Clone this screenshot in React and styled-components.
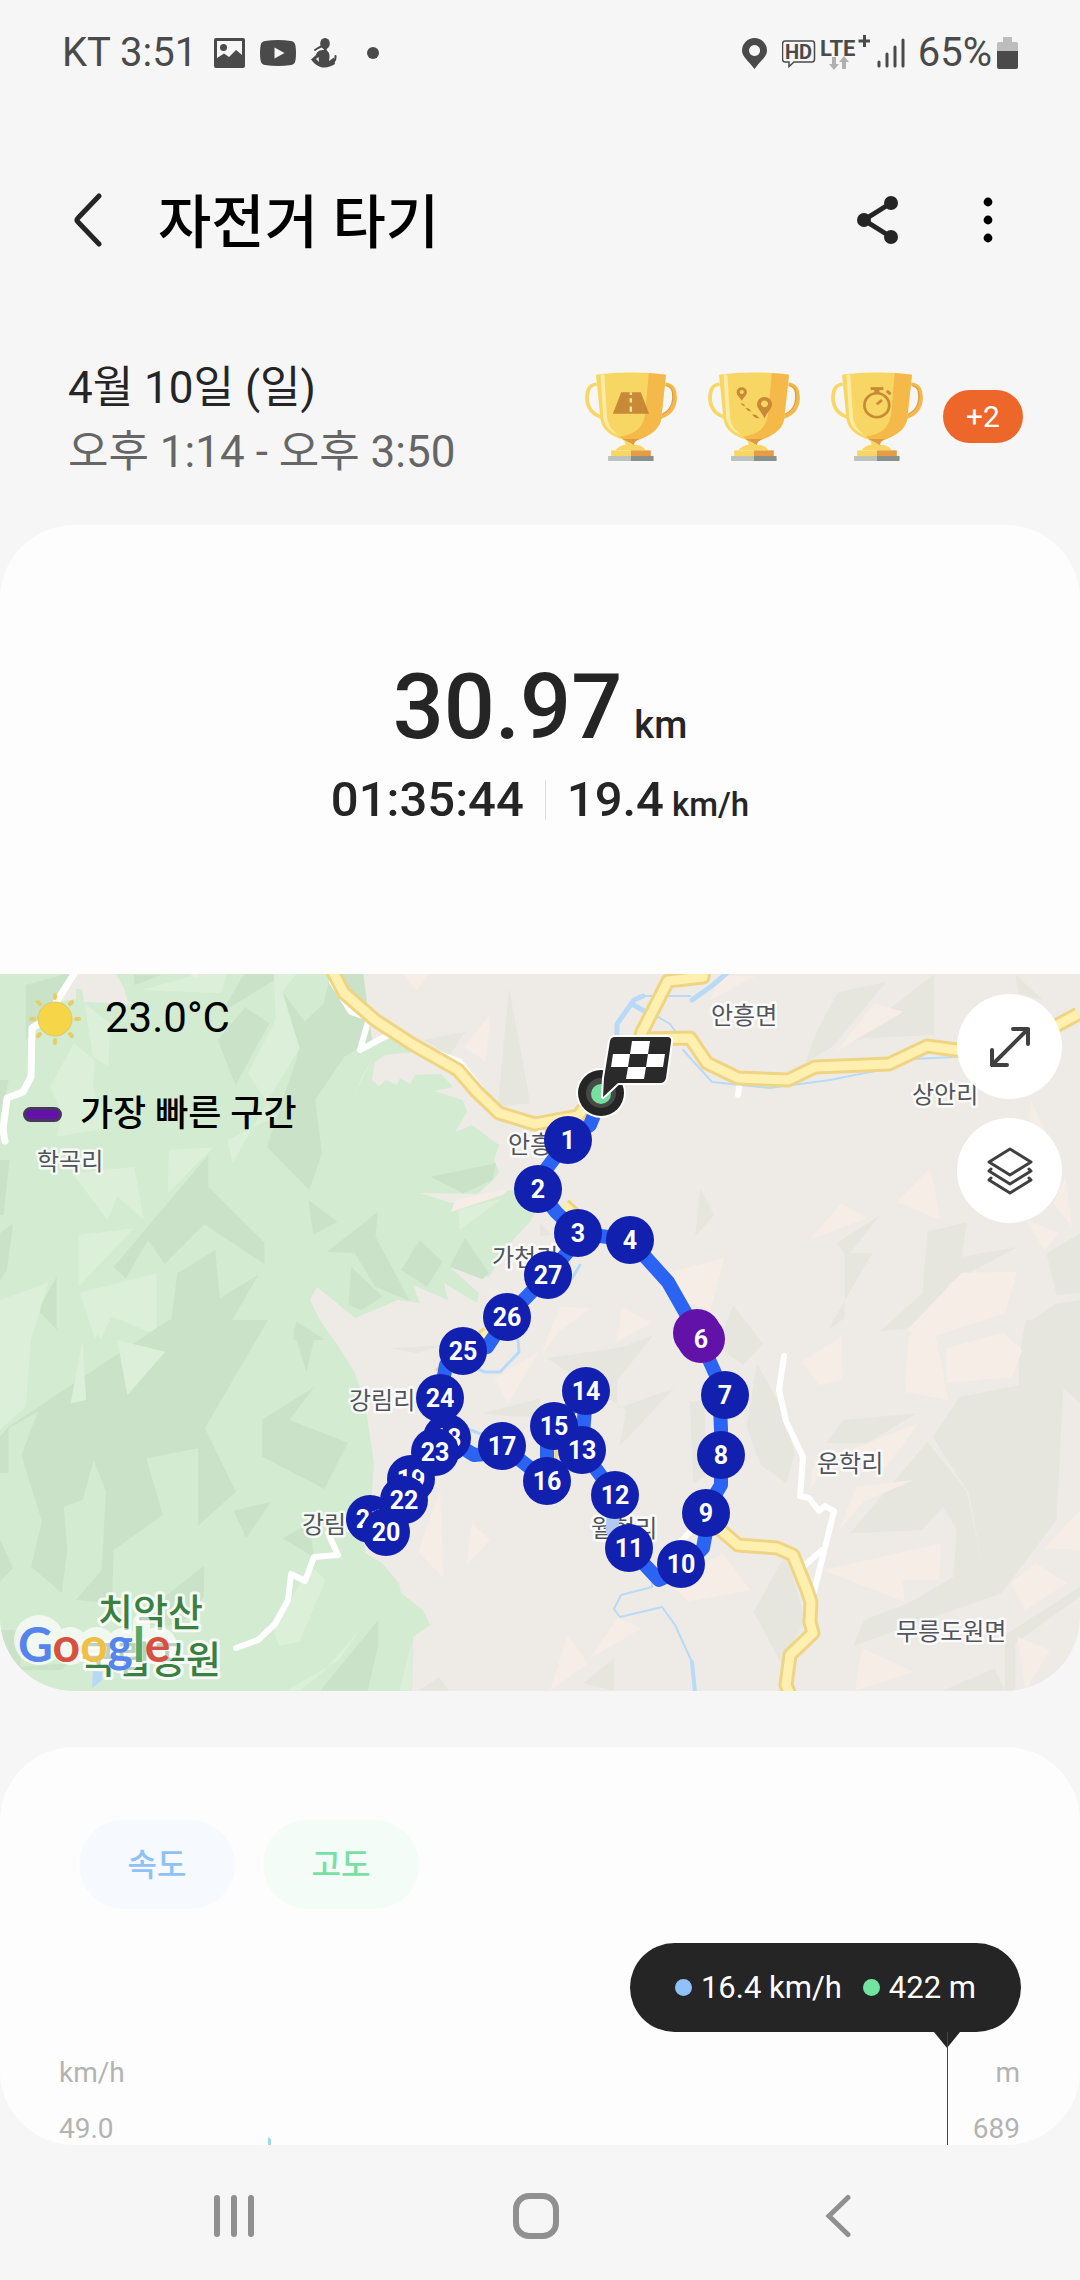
import React from 'react';
import styled, { createGlobalStyle } from 'styled-components';

const FONT = "Roboto, 'Noto Sans CJK KR', sans-serif";

const GlobalStyle = createGlobalStyle`
  *, *::before, *::after { box-sizing: border-box; }
  body {
    margin: 0;
    background: #f6f6f6;
    color: #252525;
    font-family: ${FONT};
  }
  button {
    font-family: inherit;
    border: 0;
    padding: 0;
    background: none;
    cursor: pointer;
  }
  h1, p { margin: 0; }
  svg { display: block; }
`;

const Screen = styled.div`
  display: flex;
  flex-direction: column;
  min-height: 100vh;
`;

/* ---------- status bar ---------- */

const StatusBar = styled.div`
  display: flex;
  align-items: center;
  justify-content: space-between;
  height: 106px;
  padding: 0 62px;
  color: #4a4a4a;
  font-size: 40px;
  line-height: 48px;
`;

const StatusGroup = styled.div`
  display: flex;
  align-items: center;
  gap: ${(p) => p.$gap}px;
`;

/* ---------- app bar ---------- */

const AppBar = styled.header`
  display: flex;
  align-items: center;
  height: 228px;
  padding: 0 64px 0 60px;
`;

const IconButton = styled.button`
  display: grid;
  place-items: center;
  width: 56px;
  height: 72px;
`;

const Title = styled.h1`
  flex: 1;
  margin-left: 42px;
  padding-top: 6px;
  color: #000;
  font-size: 58px;
  line-height: 72px;
  font-weight: 500;
`;

const Actions = styled.div`
  display: flex;
  gap: 54px;
`;

/* ---------- date and trophies ---------- */

const Summary = styled.section`
  display: flex;
  align-items: center;
  justify-content: space-between;
  padding: 22px 57px 41px 68px;
`;

const SummaryLine = styled.p`
  color: ${(p) => (p.$muted ? '#666' : '#252525')};
  font-size: 44px;
  line-height: 64px;
`;

const Awards = styled.div`
  display: flex;
  align-items: center;
  gap: 20px;
  padding-bottom: 8px;
`;

const Trophies = styled.div`
  display: flex;
  gap: 31px;
`;

const MoreBadge = styled.button`
  width: 80px;
  height: 53px;
  border-radius: 27px;
  background: #ed672b;
  color: #fff;
  font-size: 30px;
  line-height: 53px;
`;

/* ---------- cards ---------- */

const Card = styled.section`
  overflow: hidden;
  border-radius: 74px;
  background: #fdfdfd;
`;

const Totals = styled.div`
  display: flex;
  flex-direction: column;
  align-items: center;
  gap: 12px;
  padding: 133px 24px 144px;
  font-weight: 500;
`;

const Metric = styled.p`
  display: flex;
  align-items: baseline;
  gap: ${(p) => (p.$large ? 12 : 8)}px;
  font-size: ${(p) => (p.$large ? 90 : 49)}px;
  line-height: ${(p) => (p.$large ? 100 : 60)}px;
`;

const Unit = styled.span`
  font-size: ${(p) => (p.$large ? 38 : 33)}px;
  line-height: 40px;
`;

const MetricRow = styled.div`
  display: flex;
  align-items: center;
`;

const Divider = styled.span`
  width: 1px;
  height: 40px;
  margin: 0 21px;
  background: #dedede;
`;

/* ---------- map ---------- */

const MapPanel = styled.div`
  position: relative;
  height: 717px;
`;

const MapCanvas = styled.svg`
  width: 100%;
  height: 100%;
`;

const MapInfo = styled.div`
  position: absolute;
  top: 16px;
  left: 23px;
  display: flex;
  flex-direction: column;
  gap: 40px;
  color: #000;
`;

const InfoRow = styled.div`
  display: flex;
  align-items: center;
  gap: 18px;
  font-size: ${(p) => p.$size}px;
  font-weight: ${(p) => (p.$strong ? 500 : 400)};
  line-height: 56px;
`;

const Swatch = styled.span`
  width: 39px;
  height: 15px;
  border: 3px solid #47385a;
  border-radius: 8px;
  background: #6212a8;
`;

const MapTools = styled.div`
  position: absolute;
  top: 20px;
  right: 18px;
  display: flex;
  flex-direction: column;
  gap: 19px;
`;

const RoundButton = styled.button`
  display: grid;
  place-items: center;
  width: 105px;
  height: 105px;
  border-radius: 50%;
  background: #fff;
`;

const Wordmark = styled.span`
  position: absolute;
  left: 18px;
  bottom: 17px;
  font-family: Lato, sans-serif;
  font-size: 48px;
  font-weight: 700;
  line-height: 60px;
`;

const Letter = styled.span`
  color: ${(p) => p.$color};
`;

/* ---------- chart card ---------- */

const ChartCard = styled(Card)`
  display: flex;
  flex-direction: column;
  margin-top: 56px;
  padding-top: 73px;
`;

const Chips = styled.div`
  display: flex;
  gap: 28px;
  padding: 0 79px;
`;

const Chip = styled.button`
  width: 156px;
  height: 89px;
  padding-bottom: 5px;
  border-radius: 45px;
  background: ${(p) => p.$bg};
  color: ${(p) => p.$color};
  font-size: 32px;
  font-weight: 500;
`;

const Readout = styled.div`
  position: relative;
  align-self: flex-end;
  display: flex;
  align-items: center;
  gap: 21px;
  height: 89px;
  margin: 34px 59px 25px;
  padding: 0 45px;
  border-radius: 45px;
  background: #252525;
  color: #fff;
  font-size: 31px;

  &::before {
    content: '';
    position: absolute;
    top: 100%;
    right: 61px;
    width: 26px;
    height: 16px;
    background: #252525;
    clip-path: polygon(0 0, 100% 0, 50% 100%);
  }

  &::after {
    content: '';
    position: absolute;
    top: 100%;
    right: 73px;
    width: 1px;
    height: 113px;
    background: #444;
  }
`;

const Reading = styled.span`
  display: flex;
  align-items: center;
  gap: 9px;

  &::before {
    content: '';
    width: 17px;
    height: 17px;
    border-radius: 50%;
    background: ${(p) => p.$color};
  }
`;

const Axis = styled.div`
  position: relative;
  display: flex;
  flex-direction: column;
  gap: 24px;
  padding: 0 60px 0 59px;
  color: #b3b3b3;
  font-size: 28px;
  line-height: 32px;
`;

const AxisRow = styled.div`
  display: flex;
  justify-content: space-between;
`;

const Trace = styled.svg`
  position: absolute;
  left: 268px;
  bottom: 0;
`;

/* ---------- navigation bar ---------- */

const NavBar = styled.nav`
  display: grid;
  grid-template-columns: repeat(3, 1fr);
  align-items: center;
  height: 135px;
  padding: 6px 91px 0 83px;
`;

const NavButton = styled.button`
  display: grid;
  place-items: center;
  height: 100px;
`;

/* ---------- drawings ---------- */

const TrophyIcon = ({ children }) => (
  <svg width="92" height="89" viewBox="131 98 267 268" preserveAspectRatio="none" aria-hidden="true">
    <path d="M165 135C140 136 136 160 137 180C139 208 154 226 180 234" fill="none" stroke="#f8d766" strokeWidth="11" />
    <path d="M364 135C389 136 393 160 392 180C390 208 375 226 349 234" fill="none" stroke="#f5b94a" strokeWidth="11" />
    <path d="M368 140C384 142 387 160 386 178C384 202 372 218 354 226" fill="none" stroke="#de9c42" strokeWidth="4" />
    <path d="M163 106C220 97 310 97 366 106L352 240C346 276 310 292 286 302H243C206 292 180 270 176 240Z" fill="#f8d663" />
    <path d="M316 101L366 106L352 240C346 276 310 292 286 302H243L232 292C280 286 302 262 306 220Z" fill="#f5b94a" />
    <path d="M176 106L187 105L195 235C199 262 212 276 228 287C203 278 188 262 184 236Z" fill="#fdeba5" />
    <path d="M240 300H288L280 306C270 312 278 318 270 319L256 316Z" fill="#e09a42" />
    <path d="M238 299C252 306 268 314 272 318H284C296 320 304 328 307 334H220C224 326 236 318 248 318C250 310 244 304 238 299Z" fill="#f8d663" />
    <path d="M207 334H264V352H207Z" fill="#f8d663" />
    <path d="M264 334H322V352H264Z" fill="#e59c42" />
    <path d="M198 351H264V366H198Z" fill="#bcc2bc" />
    <path d="M264 351H330V366H264Z" fill="#8a908a" />
    {children}
  </svg>
);

const RoadMark = () => (
  <g>
    <path d="M236 159H293L317 224H212Z" fill="#c98a37" />
    <path d="M264 160V224" stroke="#fbe6a0" strokeWidth="7" strokeDasharray="7 10 13 12 16 9" />
  </g>
);

const RouteMark = () => (
  <g fill="#c98a37" fillRule="evenodd">
    <path d="M229 184C222 172 214 168 214 159A15 15 0 0 1 244 159C244 168 236 172 229 184ZM229 152a6 6 0 1 0 .1 0Z" />
    <path d="M295 238C286 216 273 208 273 195A22 22 0 0 1 317 195C317 208 304 216 295 238ZM295 184a10 10 0 1 0 .1 0Z" />
    <path d="M226 192l9 2 4 7-8-2ZM239 206l10 2 9 9-11-2ZM258 226l12 1 11 11-13-2Z" />
  </g>
);

const TimerMark = () => (
  <g fill="none" stroke="#c98a37">
    <ellipse cx="264" cy="198" rx="36" ry="36" strokeWidth="8" />
    <path d="M246 148H283" strokeWidth="9" />
    <path d="M264 150V162" strokeWidth="15" />
    <path d="M293 155L304 165" strokeWidth="9" />
    <path d="M264 195L279 182" strokeWidth="8" />
  </g>
);

const PictureIcon = () => (
  <svg width="31" height="30" viewBox="0 0 31 30" fill="#4a4a4a" aria-hidden="true">
    <path fillRule="evenodd" d="M2 0H29Q31 0 31 2V28Q31 30 29 30H2Q0 30 0 28V2Q0 0 2 0ZM3 3V20L10 15.500L15 19L22 12L28 17V3Z" />
    <circle cx="9.500" cy="9.500" r="3.500" />
  </svg>
);

const VideoIcon = () => (
  <svg width="36" height="26" viewBox="0 0 36 26" aria-hidden="true">
    <path d="M5 1Q18-1 31 1Q35 1.500 35.500 6Q36.500 13 35.500 20Q35 24.500 31 25Q18 27 5 25Q1 24.500 .5 20Q-.5 13 .5 6Q1 1.500 5 1Z" fill="#4a4a4a" />
    <path d="M14.500 7.500L24.500 13L14.500 18.500Z" fill="#f6f6f6" />
  </svg>
);

const AppIcon = () => (
  <svg width="26" height="30" viewBox="0 0 26 30" aria-hidden="true">
    <ellipse cx="14" cy="5.500" rx="4.800" ry="5.500" fill="#4a4a4a" />
    <path d="M11 8H17L15.500 12C19 15 19 18 18 23L23 19.500L24 26C20 28.500 16 30 12 29.500C7 29 3 25.500 0 21.500L5 17C6 13 9 12 13 12Z" fill="#4a4a4a" />
    <path d="M4 12L7 10L11 8" fill="none" stroke="#4a4a4a" strokeWidth="2" strokeLinecap="round" />
    <path d="M24.500 18Q25 24 19 26" fill="none" stroke="#4a4a4a" strokeWidth="2" strokeLinecap="round" />
    <path d="M5 21L7.500 19L8 24Z" fill="#f6f6f6" />
  </svg>
);

const PinIcon = () => (
  <svg width="25" height="31" viewBox="0 0 25 31" aria-hidden="true">
    <path fillRule="evenodd" fill="#4a4a4a" d="M12.500 31C6 22 0 19 0 12.500A12.500 12.500 0 0 1 25 12.500C25 19 19 22 12.500 31ZM12.500 7a5.500 5.500 0 1 0 .1 0Z" />
  </svg>
);

const NetworkIcon = () => (
  <svg width="88" height="36" viewBox="782 34 88 36" fontFamily="Roboto, sans-serif" fontWeight="700" fill="#4a4a4a" aria-hidden="true">
    <path d="M785 40H812Q814.500 40 814.500 43V58Q814.500 61 812 61H794L789 65.500V61H785Q782.500 61 782.500 58V43Q782.500 40 785 40Z" fill="none" stroke="#4a4a4a" strokeWidth="1.500" />
    <text x="785" y="58" fontSize="20">HD</text>
    <text x="820" y="55" fontSize="22">LTE</text>
    <path d="M864.500 34V46M858.500 40H870.500" stroke="#4a4a4a" strokeWidth="3" />
    <path d="M832 56H836V63H839L834 69L829 63H832ZM842 68H846V61H849L844 55L839 61H842Z" fill="#b0b0b0" />
  </svg>
);

const SignalIcon = () => (
  <svg width="28" height="30" viewBox="0 0 28 30" stroke="#4a4a4a" strokeWidth="3" strokeLinecap="round" aria-hidden="true">
    <path d="M2 24V28M10 16V28M18 9V28M26 2V28" />
  </svg>
);

const BatteryIcon = () => (
  <svg width="21" height="32" viewBox="0 0 21 32" aria-hidden="true">
    <path d="M6 0H15V5H19Q21 5 21 7V14H0V7Q0 5 2 5H6Z" fill="#bdbdbd" />
    <path d="M0 14H21V30Q21 32 19 32H2Q0 32 0 30Z" fill="#4a4a4a" />
  </svg>
);

const SunIcon = () => (
  <svg width="64" height="56" viewBox="0 0 64 56" aria-hidden="true">
    <circle cx="32" cy="29" r="17" fill="#f7d548" stroke="#dcc869" />
    <g stroke="#e6cf62" strokeWidth="4" strokeLinecap="round">
      <path d="M32 5V8M32 50V53M8 29H11M53 29H56M15 12L17 14M47 44L49 46M15 46L17 44M47 14L49 12" />
    </g>
  </svg>
);

/* ---------- map data ---------- */

const FASTEST = '#6212a8';
const MARKER = '#1220b0';

const markers = [
  [1, 568, 1140], [2, 538, 1189], [3, 578, 1233], [4, 630, 1240],
  ['', 697, 1333, FASTEST], [6, 701, 1339, FASTEST], [7, 725, 1395], [8, 721, 1455],
  [9, 706, 1513], [10, 681, 1564], [11, 629, 1548], [12, 615, 1495],
  [13, 582, 1450], [14, 586, 1391], [15, 554, 1426], [16, 547, 1481],
  [17, 502, 1446], [18, 447, 1438], [19, 411, 1479], [21, 370, 1519],
  [20, 386, 1532], [22, 404, 1500], [23, 435, 1452], [24, 440, 1398],
  [25, 463, 1351], [26, 507, 1317], [27, 548, 1275],
];

const places = [
  ['학곡리', 37, 1170], ['안흥면', 711, 1024], ['상안리', 912, 1103],
  ['안흥리', 508, 1153], ['가천리', 492, 1266], ['강림리', 349, 1409],
  ['강림리', 302, 1533], ['월현리', 591, 1537], ['운학리', 817, 1472],
  ['무릉도원면', 896, 1640],
];

const Terrain = () => (
  <g>
    <rect x="0" y="974" width="1080" height="717" fill="#eeebe6" />
    <path
      fill="#d3ebd1"
      d="M0 974H332L345 996L370 1015L358 1053L386 1036L415 1052L385 1055L375 1062L372 1080L379 1086L386 1080L397 1085L400 1078L410 1084L415 1075L441 1074L453 1087L434 1091L463 1100L467 1112L455 1132L472 1125L499 1145L494 1160L499 1172L496 1177L478 1194L420 1193L451 1203L510 1190L545 1196L530 1222L510 1243L489 1277L451 1268L479 1293L477 1303L444 1283L448 1300L413 1285L420 1303L398 1300L355 1318L317 1287L310 1300L320 1320L341 1350L355 1373L365 1403L374 1463L372 1493L363 1520L365 1553L382 1563L399 1583L401 1593L423 1610L430 1625L413 1637L412 1691H0Z"
    />
    <path d="M74 974H116L124 988L128 1002L138 1004L84 1002L82 989L76 989V999L54 1002Z" fill="#eeebe6" />
    <path d="M128 1362L158 1358L126 1394Z" fill="#eeebe6" />

    {/* shaded relief, north-west */}
    <g transform="translate(0 960) scale(.3444 .3333)">
      <path fill="#cae2c8" d="M75 75L190 42H215L160 130L75 240ZM712 142L782 190L684 376L632 240ZM710 42H825L640 160ZM1055 42L960 42L940 130L885 185L820 95L840 170L870 260L860 300L775 560L898 690L935 580L915 420L1000 290L1080 240ZM605 585V680L768 848V912L593 793L478 912L430 840L365 955L330 920ZM895 720L980 785L910 825ZM1098 755L950 875L1030 880L1090 980L1190 1022L1090 830ZM1218 840L1285 905L1240 980L1165 930ZM1350 835L1420 940L1400 958L1305 920ZM1250 650L1440 610L1430 660L1345 700ZM1020 920L1110 1010L1050 1050L1012 1035ZM625 870L638 1015L750 945L640 1140H490L515 940ZM0 360L25 360L10 440L0 470ZM0 820L38 790L20 930L0 960ZM0 600L28 600L10 765H0ZM165 950V1110L110 1050ZM860 1085L945 1140H850ZM390 45H470L390 75Z" />
      <path fill="#dbefd9" d="M410 90L580 42H660L640 100ZM795 42H860L820 95L870 265L790 400L675 610L660 540L800 470L720 340L800 180ZM215 250L275 300L270 385L310 505L165 530L180 460L145 380ZM245 130L320 190L315 320L270 290ZM490 570L620 562L487 700ZM210 640L390 620L418 780L340 710L312 780ZM228 825L388 805L228 980ZM232 998L455 940V1125L325 1070L275 1135ZM0 1020L140 968L90 1140H0ZM1330 750L1460 715L1335 810ZM1080 300L1030 405L1050 350Z" />
      <path fill="#eeebe6" d="M550 42H580L568 55Z" />
      <path fill="#f5ede6" d="M1170 42H1245L1210 92ZM1425 160L1410 305L1348 260ZM1310 755L1320 720L1480 685L1460 705Z" />
      <path fill="#e6e6df" d="M1478 82L1540 430L1445 440ZM1230 240L1350 215L1305 290Z" />
    </g>

    {/* shaded relief, north-east */}
    <g transform="translate(540 960) scale(.3444 .3333)">
      <path fill="#e6e6df" d="M865 97L1005 66L850 260L770 310L800 220ZM1145 42V225L940 235L880 255ZM1380 42L1460 120L1390 100ZM465 685L506 765L450 830ZM988 765L900 880H965L835 1110L885 1075V880L860 850ZM1125 815L1240 785L1225 890L1390 860L1190 970L1110 1100L985 1115L1110 1000ZM1568 820V1000L1500 1005L1470 880ZM1405 1095L1500 1030L1568 1020V1140H1405ZM560 1035L640 1140H520ZM0 790L35 825L0 830Z" />
      <path fill="#f5ede6" d="M520 48L625 48L495 120ZM970 130L1055 155L860 275ZM1133 625L1163 780L1036 725ZM875 730L950 775L785 838ZM535 895L495 1050L385 1010L380 935ZM1225 938L1385 935L1350 1060L1110 1140L1065 1110ZM1425 420L1470 520L1420 500ZM1525 650L1545 800L1490 730ZM1410 780L1508 820L1465 870ZM60 1040L150 1045L20 1140ZM235 1040L325 1090L230 1140Z" />
    </g>

    {/* shaded relief, south-west */}
    <g transform="translate(0 1320) scale(.3444 .3333)">
      <path fill="#cae2c8" d="M490 0H778L595 325L685 515L575 618V385L425 415L473 585L330 690L325 850L220 840L295 750L308 515L272 420L240 540L185 560L195 690L180 820L90 740L122 605L62 405L110 275L25 325V460L0 460V350L25 320ZM272 205L290 270L400 225L515 95L620 92L595 325L400 400L180 410V325ZM850 25L915 45L890 155ZM912 202L840 300L1010 368L942 507L762 410V298ZM788 545L715 655L678 572ZM820 655L900 610L910 710ZM592 738V830L520 920L380 910ZM0 660L38 745L0 785ZM1098 900V975L1068 1112H930ZM0 930L60 930V1040L200 1030L180 1050H40Z" />
      <path fill="#dbefd9" d="M0 0H95L75 260L0 330ZM240 60L250 240L205 250ZM340 60L480 95L370 225ZM265 0H320L292 60ZM945 780L870 965L810 978L790 920L905 740ZM1050 922L985 1020L830 1112H870L935 1060ZM1195 965V1112H1160Z" />
      <path fill="#f5ede6" d="M1278 510L1288 775L1215 695ZM1370 610L1422 660L1355 735ZM1565 95L1475 250L1435 175Z" />
      <path fill="#e6e6df" d="M1130 85L1290 75L1210 100ZM1400 280L1568 235V290L1490 290ZM1275 1072L1305 1112H1215Z" />
    </g>

    {/* shaded relief, south-east */}
    <g transform="translate(540 1320) scale(.3444 .3333)">
      <path fill="#e6e6df" d="M570 0L650 70L590 135L530 90ZM20 115L240 80L330 45L225 180V265L390 205L230 380L250 270ZM630 130L700 260L740 400L715 490L640 435L600 320ZM1410 0H1568V250L1520 205L1500 600L1340 820L1285 740L1245 520L1140 350L1220 230L1390 195V120ZM880 300L1095 280L950 370H830ZM1125 365L1240 515L1285 740L1340 820L910 978L940 900L1070 850L1200 770L1210 630L1170 560L1110 630L900 640ZM715 700L620 875L700 1030L770 900ZM215 1015V1112L125 1090ZM1350 945L1568 800V830L1380 970V1112H1350ZM1320 1045L1170 1112H1350ZM435 245L480 240V470L445 490Z" />
      <path fill="#f5ede6" d="M80 0L5 105L40 0ZM235 0H325L220 70ZM875 50L878 180L810 195L760 125ZM1345 38L1400 90L1370 170L1180 190V85ZM1070 50L1140 0L1185 240L1060 215ZM1100 310L1005 440L850 410ZM1085 480L940 545L865 635L920 500ZM1165 670L1158 780L1050 780L1060 845L820 750ZM530 700L610 810L430 845L380 790ZM225 895L295 925L145 1015ZM80 945L140 1030L30 1112ZM935 985L1085 1055L915 1112ZM1440 730L1530 790L1410 870L1365 790ZM1385 950L1480 990L1410 1112ZM1568 570V690L1465 685ZM790 440L830 430L785 510Z" />
    </g>
  </g>
);

const Roads = () => (
  <g fill="none" strokeLinejoin="round" strokeLinecap="round">
    <g stroke="#b9daf7" strokeWidth="4">
      <path d="M617 1035V1024L634 1000L643 996M632 1004L646 1012M692 1000L713 985L728 972" strokeWidth="5" />
      <path d="M643 996H690M655 1015L670 1024L678 1035M683 1050L712 1082L770 1088L830 1080L890 1068M912 1059L955 1057" strokeWidth="2" />
      <path d="M652 1565V1587L621 1595L614 1609L620 1617L662 1607L675 1625L692 1662" strokeWidth="2" />
      <path d="M692 1662L695 1692" />
      <path d="M518 1340L519 1352L500 1372H485L475 1368M471 1430L488 1437M580 1265L572 1278" strokeWidth="3" />
    </g>
    <path d="M93 1671L102 1672V1680L92 1688Z" fill="#b5d7f8" />
    <g stroke="#fff" strokeWidth="6">
      <path d="M74 974L45 1020L32 1028L31 1077L23 1092L7 1098L3 1130L5 1141" strokeWidth="7" />
      <path d="M332 982L351 1012L369 1018L360 1050L390 1034L460 1062L480 1088M739 1087L738 1095" />
      <path d="M328 1533L338 1555L314 1557L305 1581L291 1574L288 1600L275 1624L258 1640L236 1648" />
      <path d="M784 1356L779 1390L786 1421L803 1457L800 1496L809 1498L819 1511L825 1506L834 1511L814 1592M822 1550L804 1566M690 1532L672 1550" />
    </g>
    {[['#efd583', 15], ['#fff0b0', 9]].map(([color, width]) => (
      <g key={color} stroke={color} strokeWidth={width} strokeLinecap="butt">
        <path d="M332 970L344 993L375 1020L412 1044L458 1070L477 1092L499 1113L535 1124L578 1116L598 1090" />
        <path d="M705 966L703 977L668 981L642 1032L640 1039L690 1038L707 1063L738 1078L788 1080L815 1067L889 1064L927 1046L1000 1056L1078 1014" />
        <path d="M716 1526L738 1545L777 1548L793 1555L807 1590L811 1602L810 1622L813 1633L790 1655L786 1685L791 1697" />
        <path d="M564 1205L590 1229M488 1333L440 1375M586 1400L582 1440M550 1430V1460" />
      </g>
    ))}
  </g>
);

const WordmarkHalo = () => (
  <g fill="#fff" opacity=".65">
    <circle cx="39" cy="1640" r="25" />
    <circle cx="70" cy="1646" r="19" />
    <circle cx="97" cy="1646" r="19" />
    <rect x="106" y="1628" width="34" height="46" rx="17" />
    <rect x="133" y="1614" width="17" height="50" rx="8" />
    <circle cx="158" cy="1646" r="19" />
  </g>
);

const RouteMap = () => (
  <MapCanvas viewBox="0 974 1080 717" preserveAspectRatio="xMidYMid slice" role="img" aria-label="자전거 경로 지도">
    <Terrain />
    <Roads />
    <g fontFamily={FONT} fontSize="24" fill="#50555b" stroke="#fff" strokeOpacity=".8" strokeWidth="5" strokeLinejoin="round" paintOrder="stroke">
      {places.map(([name, x, y]) => (
        <text key={`${name}${x}`} x={x} y={y}>{name}</text>
      ))}
      <g fontSize="38" fontWeight="500" fill="#3b7f42" strokeWidth="6">
        <text x="98" y="1626">치악산</text>
        <text x="81" y="1673">국립공원</text>
      </g>
    </g>
    <WordmarkHalo />
    <g fill="none" strokeLinejoin="round">
      <path d="M615 1495L612 1530L629 1548" stroke="#b3c9f2" strokeWidth="13" />
      <path
        stroke="#2b63f3"
        strokeWidth="14"
        d="M600 1100L590 1125L568 1140L538 1180V1189L556 1212L578 1233L630 1240L668 1282L697 1333L719 1382L721 1430V1485L712 1500L703 1548L681 1570L659 1580L629 1548M615 1495L582 1450L586 1391L554 1426L547 1430V1481L502 1446L486 1454L474 1455L447 1438L435 1452L411 1479L386 1532L370 1519L404 1500L435 1452L440 1398L446 1365L463 1351L487 1347L507 1317L548 1275L578 1240"
      />
    </g>
    <g fontFamily={FONT} fontSize="25" fontWeight="700" textAnchor="middle">
      {markers.map(([label, x, y, color]) => (
        <g key={`${label}${x}`}>
          <circle cx={x} cy={y} r="24" fill={color || MARKER} />
          <text x={x} y={y + 9} fill="#fff">{label}</text>
        </g>
      ))}
    </g>
    <circle cx="601" cy="1093" r="25" fill="#fff" />
    <circle cx="601" cy="1093" r="23" fill="#252525" />
    <circle cx="601" cy="1093" r="15" fill="#454a47" />
    <circle cx="601" cy="1094" r="10" fill="#78dfa0" />
    <path
      d="M615 1037H667Q672 1037 671 1042L666 1078Q665 1083 660 1083H618L603 1097L604 1078L610 1041Q611 1037 615 1037Z"
      fill="#2a2a2a"
      stroke="#fff"
      strokeWidth="4"
      strokeLinejoin="round"
      paintOrder="stroke"
    />
    <path d="M632 1041H650L648 1054H630ZM613 1054H630L628 1067H611ZM648 1054H665L663 1067H646ZM628 1067H646L644 1079H626Z" fill="#fff" />
  </MapCanvas>
);

const wordmark = [
  ['G', '#5484ec'], ['o', '#d65140'], ['o', '#f0c046'],
  ['g', '#5484ec'], ['l', '#57a863'], ['e', '#d65140'],
];

export default function App() {
  return (
    <Screen>
      <GlobalStyle />
      <StatusBar>
        <StatusGroup $gap={17}>
          <span>KT 3:51</span>
          <StatusGroup $gap={15}>
            <PictureIcon />
            <VideoIcon />
            <AppIcon />
            <svg width="42" height="12" viewBox="0 0 42 12" aria-hidden="true">
              <circle cx="21" cy="6" r="6" fill="#4a4a4a" />
            </svg>
          </StatusGroup>
        </StatusGroup>
        <StatusGroup $gap={7}>
          <StatusGroup $gap={15}>
            <PinIcon />
            <NetworkIcon />
          </StatusGroup>
          <StatusGroup $gap={13}>
            <SignalIcon />
            <StatusGroup $gap={5}>
              <span>65%</span>
              <BatteryIcon />
            </StatusGroup>
          </StatusGroup>
        </StatusGroup>
      </StatusBar>

      <AppBar>
        <IconButton aria-label="뒤로">
          <svg width="28" height="54" viewBox="0 0 28 54" fill="none" stroke="#252525" strokeWidth="5" strokeLinecap="round" strokeLinejoin="round">
            <path d="M25 3L4 25Q2 27 4 29L25 51" />
          </svg>
        </IconButton>
        <Title>자전거 타기</Title>
        <Actions>
          <IconButton aria-label="공유">
            <svg width="42" height="48" viewBox="0 0 42 48" fill="#252525">
              <path d="M34 7L7 24L34 41" fill="none" stroke="#252525" strokeWidth="5" />
              <circle cx="34" cy="7" r="7" />
              <circle cx="7" cy="24" r="7" />
              <circle cx="34" cy="41" r="7" />
            </svg>
          </IconButton>
          <IconButton aria-label="더보기">
            <svg width="10" height="46" viewBox="0 0 10 46" fill="#000">
              <circle cx="5" cy="5" r="4.400" />
              <circle cx="5" cy="23" r="4.400" />
              <circle cx="5" cy="41" r="4.400" />
            </svg>
          </IconButton>
        </Actions>
      </AppBar>

      <Summary>
        <div>
          <SummaryLine>4월 10일 (일)</SummaryLine>
          <SummaryLine $muted>오후 1:14 - 오후 3:50</SummaryLine>
        </div>
        <Awards>
          <Trophies>
            <TrophyIcon><RoadMark /></TrophyIcon>
            <TrophyIcon><RouteMark /></TrophyIcon>
            <TrophyIcon><TimerMark /></TrophyIcon>
          </Trophies>
          <MoreBadge>+2</MoreBadge>
        </Awards>
      </Summary>

      <Card>
        <Totals>
          <Metric $large>30.97<Unit $large>km</Unit></Metric>
          <MetricRow>
            <Metric>01:35:44</Metric>
            <Divider />
            <Metric>19.4<Unit>km/h</Unit></Metric>
          </MetricRow>
        </Totals>
        <MapPanel>
          <RouteMap />
          <MapInfo>
            <InfoRow $size={42}>
              <SunIcon />
              23.0°C
            </InfoRow>
            <InfoRow $size={36} $strong>
              <Swatch />
              가장 빠른 구간
            </InfoRow>
          </MapInfo>
          <MapTools>
            <RoundButton aria-label="지도 확대">
              <svg width="44" height="44" viewBox="0 0 44 44" fill="none" stroke="#404040" strokeWidth="4" strokeLinecap="round" strokeLinejoin="round">
                <path d="M4 40L40 4M25 4H40V19M4 25V40H19" />
              </svg>
            </RoundButton>
            <RoundButton aria-label="지도 유형">
              <svg width="48" height="50" viewBox="0 0 48 50" fill="none" stroke="#404040" strokeWidth="3" strokeLinecap="round" strokeLinejoin="round">
                <path d="M24 3L45 16L24 29L3 16ZM5 23L3 25L24 38L45 25L43 23M5 32L3 34L24 47L45 34L43 32" />
              </svg>
            </RoundButton>
          </MapTools>
          <Wordmark>
            {wordmark.map(([letter, color], i) => (
              <Letter key={i} $color={color}>{letter}</Letter>
            ))}
          </Wordmark>
        </MapPanel>
      </Card>

      <ChartCard>
        <Chips>
          <Chip $bg="#f6f9fd" $color="#8fc1f8">속도</Chip>
          <Chip $bg="#f4fcf8" $color="#78e0a4">고도</Chip>
        </Chips>
        <Readout>
          <Reading $color="#8fc1fb">16.4 km/h</Reading>
          <Reading $color="#72e4a1">422 m</Reading>
        </Readout>
        <Axis>
          <AxisRow><span>km/h</span><span>m</span></AxisRow>
          <AxisRow><span>49.0</span><span>689</span></AxisRow>
          <Trace width="3" height="8" viewBox="0 0 3 8" aria-hidden="true">
            <path d="M0 0L3 2V8H0Z" fill="#a3d8f2" />
          </Trace>
        </Axis>
      </ChartCard>

      <NavBar>
        <NavButton aria-label="최근 앱">
          <svg width="42" height="44" viewBox="0 0 42 44" stroke="#909090" strokeWidth="6" strokeLinecap="round">
            <path d="M4 4V40M21 4V40M38 4V40" />
          </svg>
        </NavButton>
        <NavButton aria-label="홈">
          <svg width="46" height="46" viewBox="0 0 46 46" fill="none" stroke="#909090" strokeWidth="6">
            <rect x="3" y="3" width="40" height="40" rx="13" />
          </svg>
        </NavButton>
        <NavButton aria-label="뒤로 가기">
          <svg width="28" height="44" viewBox="0 0 28 44" fill="none" stroke="#909090" strokeWidth="5" strokeLinecap="round">
            <path d="M24 3.500L5 22L24 40.500" />
          </svg>
        </NavButton>
      </NavBar>
    </Screen>
  );
}
